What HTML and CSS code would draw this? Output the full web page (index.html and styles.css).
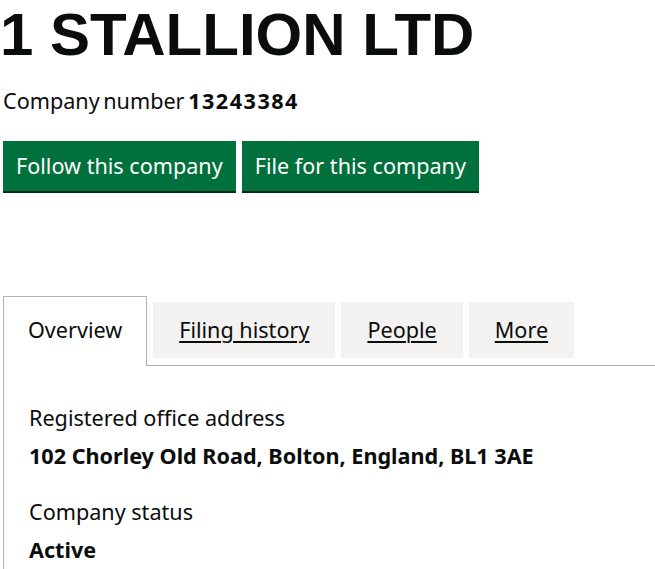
FILE: index.html
```html
<html>
<head>
<title>1 STALLION LTD overview</title>
<link rel="stylesheet" href="styles.css">
</head>
<body>
<div id="Container">
<h1 class="company-name">1 STALLION LTD</h1>
<p class="company-number">Company number <strong>13243384</strong></p>

<div class="actions">
<a class="button" href="#follow">Follow this company</a>
<a class="button" href="#file">File for this company</a>
</div>

<div class="tabs">
<ul class="tab-list">
<li class="tab tab-selected">Overview</li>
<li class="tab"><a href="#filing-history">Filing history</a></li>
<li class="tab"><a href="#people">People</a></li>
<li class="tab"><a href="#more">More</a></li>
</ul>
<div class="panel">
<dl class="details">
<dt>Registered office address</dt>
<dd>102 Chorley Old Road, Bolton, England, BL1 3AE</dd>
<dt>Company status</dt>
<dd>Active</dd>
</dl>
</div>
</div>
</div>
</body>
</html>
```

FILE: styles.css
```css
body { margin:0; overflow:hidden; color:#0b0c0c; background:#fff;
  font-family:"Noto Sans", Arial, sans-serif; font-size:21.6px; line-height:30px; }
#Container { width:720px; padding:3px 3px 0 3px; }

.company-name { margin:2px 0 0 -3px; font-family:"Liberation Sans", Arial, sans-serif;
  font-size:60px; line-height:60px; font-weight:700; }
.company-number { margin:21px 0 0 0; word-spacing:-2px; }
.company-number strong { font-weight:700; letter-spacing:1.5px; }

.actions { display:flex; gap:6px; margin-top:25px; }
.button { display:block; padding:10px 13px; background:#00703c; color:#fff;
  text-decoration:none; box-shadow:0 2px 0 #002d18; }

.tabs { margin-top:105px; }
.tab-list { display:flex; align-items:flex-start; gap:6px; margin:0 0 -1px 0; padding:0; list-style:none; }
.tab { margin-top:6px; padding:13px 26px; background:#f3f2f1; }
.tab a { color:#0b0c0c; text-decoration:underline; text-decoration-thickness:2px; text-underline-offset:3px; }
.tab-selected { position:relative; margin-top:0; height:51px; padding:18px 24px 0 24px;
  background:#fff; border:1px solid #b1b4b6; border-bottom:0; }

.panel { border:1px solid #b1b4b6; padding:37px 25px 20px 25px; }
.details { margin:0; }
.details dt { margin:0; }
.details dd { margin:8px 0 26px 0; font-weight:700; }
```
